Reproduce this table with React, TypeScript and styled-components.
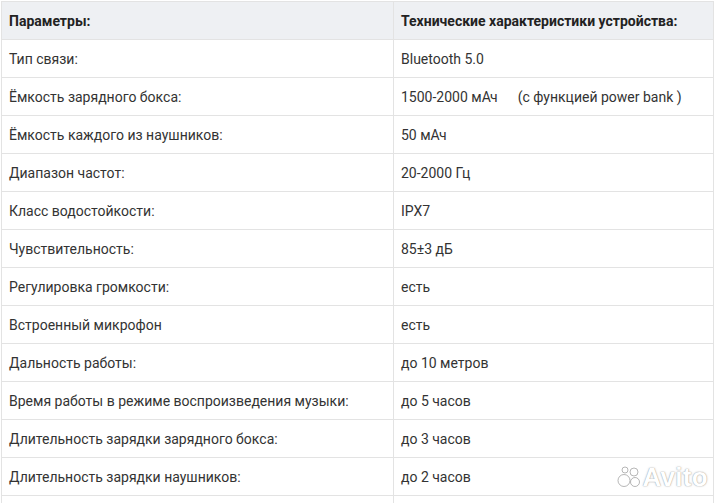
import React from "react";
import styled, { createGlobalStyle } from "styled-components";

const Global = createGlobalStyle`
  html, body { margin: 0; padding: 0; background: #ffffff; }
  body { font-family: Roboto, "Noto Sans", Arial, sans-serif; color: #333333; }
`;

const Page = styled.div`
  position: relative;
  width: 720px;
  height: 503px;
  overflow: hidden;
  padding: 1px 0 0 1px;
  box-sizing: border-box;
`;

const Table = styled.table`
  width: 713px;
  border-collapse: collapse;
  table-layout: fixed;
`;

const Row = styled.tr<{ $head?: boolean }>`
  height: 38px;
  background: ${(p) => (p.$head ? "#eef0f3" : "#ffffff")};
`;

const Cell = styled.td<{ $head?: boolean }>`
  border: 1px solid #e3e3e3;
  padding: 0 0 0 7px;
  font-size: 14px;
  line-height: 16px;
  font-weight: ${(p) => (p.$head ? 700 : 400)};
  color: ${(p) => (p.$head ? "#222222" : "#333333")};
  white-space: nowrap;
  vertical-align: middle;
`;

const Gap = styled.span`
  display: inline-block;
  width: 20px;
`;

const Watermark = styled.div`
  position: absolute;
  right: 12px;
  top: 465px;
  display: flex;
  align-items: center;
  gap: 1px;
  pointer-events: none;
`;

const MarkText = styled.span`
  font-family: "Liberation Sans", Arial, sans-serif;
  font-size: 26px;
  line-height: 24px;
  font-weight: 700;
  color: #ffffff;
  letter-spacing: 0.3px;
  text-shadow: 0 0 1px rgba(120, 120, 120, 0.75), 0 0 2px rgba(140, 140, 140, 0.5);
`;

const rows: [string, React.ReactNode][] = [
  ["Тип связи:", "Bluetooth 5.0"],
  [
    "Ёмкость зарядного бокса:",
    <>
      1500-2000 мАч<Gap />(с функцией power bank )
    </>,
  ],
  ["Ёмкость каждого из наушников:", "50 мАч"],
  ["Диапазон частот:", "20-2000 Гц"],
  ["Класс водостойкости:", "IPX7"],
  ["Чувствительность:", "85±3 дБ"],
  ["Регулировка громкости:", "есть"],
  ["Встроенный микрофон", "есть"],
  ["Дальность работы:", "до 10 метров"],
  ["Время работы в режиме воспроизведения музыки:", "до 5 часов"],
  ["Длительность зарядки зарядного бокса:", "до 3 часов"],
  ["Длительность зарядки наушников:", "до 2 часов"],
  ["", ""],
];

const Bubbles = () => (
  <svg width="24" height="22" viewBox="0 0 24 22">
    <g fill="#ffffff" stroke="rgba(140,140,140,0.7)" strokeWidth="0.9">
      <circle cx="7" cy="14.5" r="6" />
      <circle cx="18" cy="16" r="4.5" />
      <circle cx="8" cy="4" r="3" />
      <circle cx="17" cy="6" r="4" />
    </g>
  </svg>
);

export default function App() {
  return (
    <>
      <Global />
      <Page>
        <Table>
          <colgroup>
            <col style={{ width: 392 }} />
            <col />
          </colgroup>
          <tbody>
            <Row $head>
              <Cell $head>Параметры:</Cell>
              <Cell $head>Технические характеристики устройства:</Cell>
            </Row>
            {rows.map(([a, b], i) => (
              <Row key={i}>
                <Cell>{a}</Cell>
                <Cell>{b}</Cell>
              </Row>
            ))}
          </tbody>
        </Table>
        <Watermark>
          <Bubbles />
          <MarkText>Avito</MarkText>
        </Watermark>
      </Page>
    </>
  );
}
